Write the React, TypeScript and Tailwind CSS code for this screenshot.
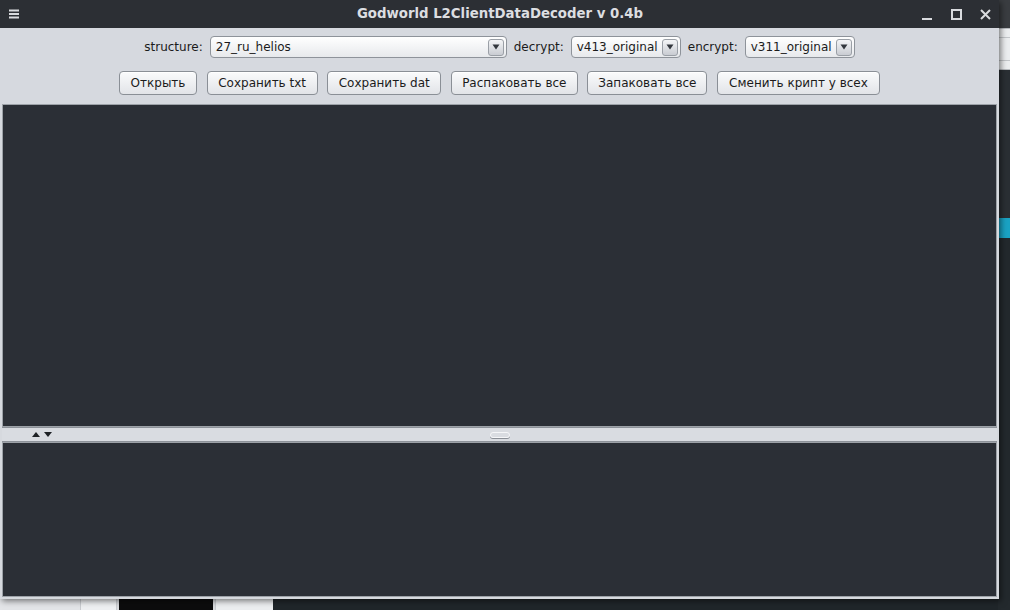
import React from "react";

const font = "font-['DejaVu_Sans','Liberation_Sans',sans-serif]";

function ArrowDown() {
  return (
    <svg width="8" height="6" viewBox="0 0 8 6">
      <path d="M0.5 0.5 H7.5 L4 5.5 Z" fill="#33373d" />
    </svg>
  );
}

function Combo({ value, width }: { value: string; width: string }) {
  return (
    <div
      className={
        "flex h-[22px] items-center justify-between rounded-[4px] border border-[#8e939a] bg-gradient-to-b from-white to-[#e7e9ec] pl-[5px] pr-[2px] " +
        width
      }
    >
      <span className="text-[12px] leading-none text-[#1b1b1b]">{value}</span>
      <span className="flex h-[17px] w-[16px] items-center justify-center rounded-[3px] border border-[#9a9fa6] bg-gradient-to-b from-[#f4f5f7] to-[#c9ccd2]">
        <ArrowDown />
      </span>
    </div>
  );
}

function Btn({ label, width }: { label: string; width: string }) {
  return (
    <button
      className={
        "flex h-[24px] items-center justify-center rounded-[4px] border border-[#8a8f96] bg-gradient-to-b from-[#fafbfc] to-[#e2e4e8] text-[12px] text-[#1b1b1b] shadow-[inset_0_1px_0_#ffffff] " +
        width
      }
    >
      {label}
    </button>
  );
}

function TitleBar() {
  return (
    <div className="flex h-[28px] items-center bg-[#2c2f34] pl-[9px] pr-[8px]">
      <div className="flex w-[110px] shrink-0">
        <svg width="10" height="10" viewBox="0 0 10 10">
          <rect x="0" y="0.5" width="10" height="2" fill="#d9dbde" />
          <rect x="0" y="4" width="10" height="2" fill="#d9dbde" />
          <rect x="0" y="7.5" width="10" height="2" fill="#d9dbde" />
        </svg>
      </div>
      <div className="flex-1 text-center text-[13.3px] font-bold text-[#dcdee1]">
        Godworld L2ClientDataDecoder v 0.4b
      </div>
      <div className="flex w-[110px] shrink-0 items-center justify-end gap-[18px]">
        <svg width="11" height="11" viewBox="0 0 11 11">
          <rect x="0" y="9" width="10" height="2" fill="#d9dbde" />
        </svg>
        <svg width="11" height="11" viewBox="0 0 11 11">
          <rect x="1" y="1" width="9" height="9" fill="none" stroke="#d9dbde" strokeWidth="2" />
        </svg>
        <svg width="11" height="11" viewBox="0 0 11 11">
          <path d="M1 1 L10 10 M10 1 L1 10" stroke="#d9dbde" strokeWidth="2" />
        </svg>
      </div>
    </div>
  );
}

function Divider() {
  return (
    <div className="flex h-[15px] items-center border-y border-[#8d9299] bg-[#d9dce1]">
      <div className="flex w-[80px] items-center gap-[4px] pl-[30px]">
        <svg width="8" height="5" viewBox="0 0 8 5">
          <path d="M0 5 L4 0 L8 5 Z" fill="#1e2125" />
        </svg>
        <svg width="8" height="5" viewBox="0 0 8 5">
          <path d="M0 0 L8 0 L4 5 Z" fill="#1e2125" />
        </svg>
      </div>
      <div className="flex flex-1 justify-center">
        <div className="h-[6px] w-[20px] rounded-[3px] border border-[#f5f6f8] shadow-[0_1px_0_#8a8f96]" />
      </div>
      <div className="w-[80px]" />
    </div>
  );
}

export default function App() {
  return (
    <div className={"relative h-[610px] w-[1010px] overflow-hidden bg-[#20262a] " + font}>
      {/* desktop behind the window */}
      <div className="absolute right-0 top-0 flex h-[610px] w-[12px] flex-col">
        <div className="h-[28px] bg-[#3a3d41]" />
        <div className="flex h-[42px] flex-col justify-between border-y border-[#b9bcc0] bg-[#eceef0] py-[8px]">
          <div className="h-px bg-[#c3c6ca]" />
          <div className="h-px bg-[#c3c6ca]" />
        </div>
        <div className="h-[148px] bg-[#2a2f34]" />
        <div className="h-[20px] bg-[#1aa3c4]" />
        <div className="flex-1 bg-[#23292d]" />
      </div>
      <div className="absolute bottom-0 left-0 flex h-[11px] w-[273px]">
        <div className="w-[80px] bg-[#e3e5e8]" />
        <div className="w-[37px] border-x border-[#c9ccd0] bg-[#eef0f2]" />
        <div className="w-[98px] border-x-2 border-[#d9dbde] bg-[#0c0c0d]" />
        <div className="flex-1 border-l border-[#c9ccd0] bg-[#eceef0]" />
      </div>

      {/* window */}
      <div className="relative flex h-[599px] w-[999px] flex-col bg-[#d6d9de] shadow-[2px_2px_6px_rgba(0,0,0,0.5)]">
        <TitleBar />
        <div className="flex flex-col items-center bg-[#d6d9df] pb-[9px] pt-[8px]">
          <div className="flex h-[22px] items-center gap-[7px]">
            <span className="text-[12px] text-[#1b1b1b]">structure:</span>
            <Combo value="27_ru_helios" width="w-[297px]" />
            <span className="text-[12px] text-[#1b1b1b]">decrypt:</span>
            <Combo value="v413_original" width="w-[110px]" />
            <span className="text-[12px] text-[#1b1b1b]">encrypt:</span>
            <Combo value="v311_original" width="w-[110px]" />
          </div>
          <div className="mt-[13px] flex gap-[9.6px]">
            <Btn label="Открыть" width="w-[78px]" />
            <Btn label="Сохранить txt" width="w-[111px]" />
            <Btn label="Сохранить dat" width="w-[114px]" />
            <Btn label="Распаковать все" width="w-[127px]" />
            <Btn label="Запаковать все" width="w-[120px]" />
            <Btn label="Сменить крипт у всех" width="w-[163px]" />
          </div>
        </div>
        <div className="flex flex-1 flex-col px-[2px] pb-[2px]">
          <div className="h-[323px] border border-[#9da2a8] bg-[#2b2f36]" />
          <Divider />
          <div className="flex-1 border border-[#9da2a8] bg-[#2b2f36]" />
        </div>
      </div>
    </div>
  );
}
